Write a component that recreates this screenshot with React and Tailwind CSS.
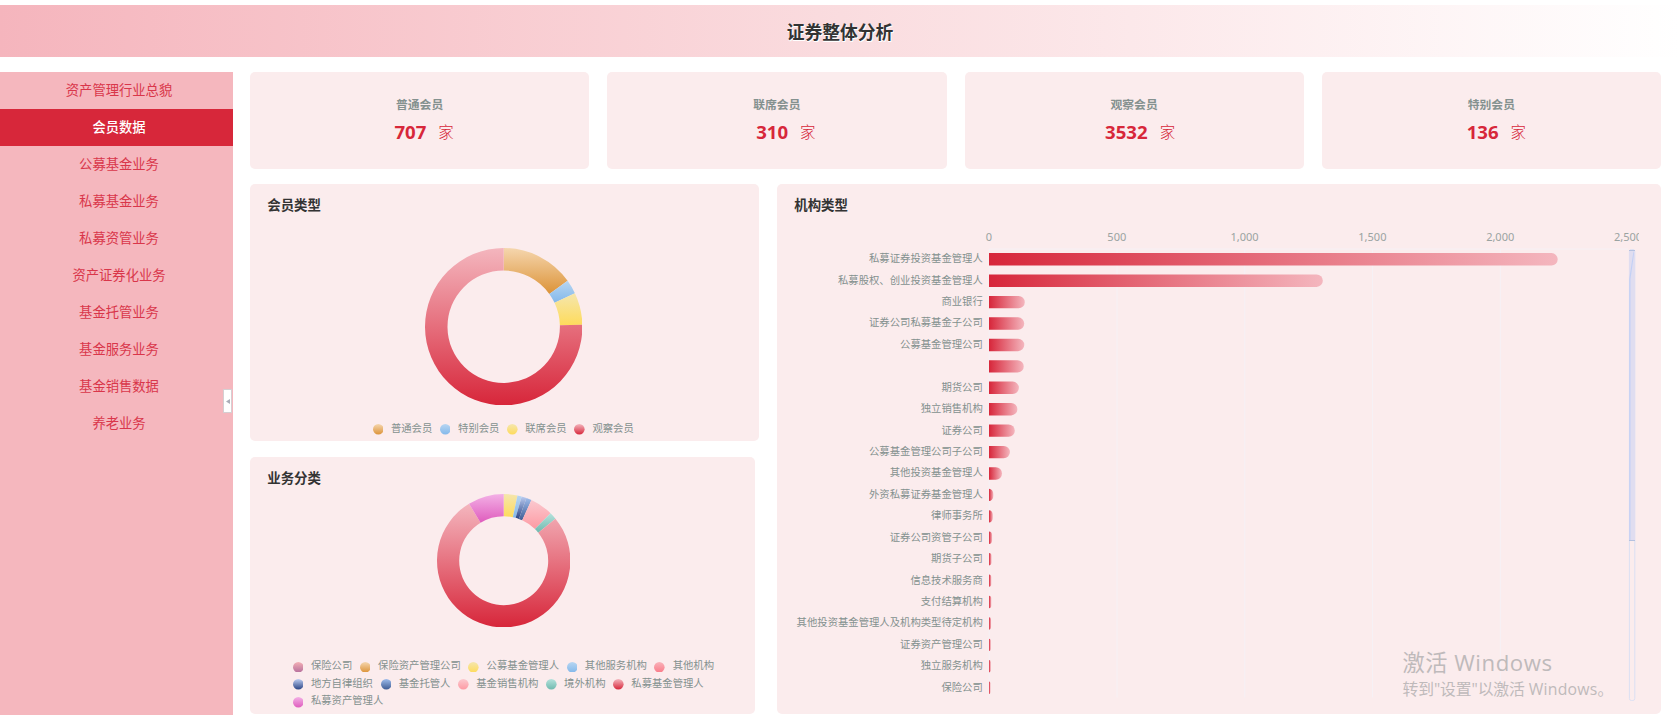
import React from 'react';

const menu = [
  '资产管理行业总貌',
  '会员数据',
  '公募基金业务',
  '私募基金业务',
  '私募资管业务',
  '资产证券化业务',
  '基金托管业务',
  '基金服务业务',
  '基金销售数据',
  '养老业务',
];

const stats = [
  { name: '普通会员', value: 707, indent: 'pl-[9px]' },
  { name: '联席会员', value: 310, indent: 'pl-[18px]' },
  { name: '观察会员', value: 3532, indent: 'pl-[12px]' },
  { name: '特别会员', value: 136, indent: 'pl-[10px]' },
];

const colors = {
  mauve: ['#f4b0b6', '#b66f9c'],
  orange: ['#f5d6ae', '#dc9338'],
  yellow: ['#f5e6ae', '#fedb5b'],
  blue: ['#b8d6f2', '#83b8ea'],
  rose: ['#f9b3ba', '#fa7b89'],
  navy: ['#bccdf2', '#2b4484'],
  steel: ['#9ebcec', '#3f5c93'],
  pink: ['#fbc9cf', '#fd9aa3'],
  teal: ['#b5e2dc', '#6fb9ae'],
  red: ['#f4b6be', '#d7263a'],
  magenta: ['#f3b0e6', '#df5cbd'],
};

const memberTypes = [
  { name: '普通会员', color: 'orange', end: 54.3 },
  { name: '特别会员', color: 'blue', end: 64.8 },
  { name: '联席会员', color: 'yellow', end: 88.6 },
  { name: '观察会员', color: 'red', end: 360 },
];

const businessTypes = [
  { name: '保险公司', color: 'mauve', end: 0 },
  { name: '保险资产管理公司', color: 'orange', end: 0 },
  { name: '公募基金管理人', color: 'yellow', end: 11.9 },
  { name: '其他服务机构', color: 'blue', end: 15.6 },
  { name: '其他机构', color: 'rose', end: 15.6 },
  { name: '地方自律组织', color: 'navy', end: 20 },
  { name: '基金托管人', color: 'steel', end: 24.6 },
  { name: '基金销售机构', color: 'pink', end: 44.6 },
  { name: '境外机构', color: 'teal', end: 50.9 },
  { name: '私募基金管理人', color: 'red', end: 328.7 },
  { name: '私募资产管理人', color: 'magenta', end: 360 },
];

const orgs = [
  ['私募证券投资基金管理人', 2225],
  ['私募股权、创业投资基金管理人', 1306],
  ['商业银行', 140],
  ['证券公司私募基金子公司', 138],
  ['公募基金管理公司', 138],
  ['', 136],
  ['期货公司', 117],
  ['独立销售机构', 111],
  ['证券公司', 101],
  ['公募基金管理公司子公司', 82],
  ['其他投资基金管理人', 51],
  ['外资私募证券基金管理人', 17],
  ['律师事务所', 15],
  ['证券公司资管子公司', 12],
  ['期货子公司', 10],
  ['信息技术服务商', 9],
  ['支付结算机构', 9],
  ['其他投资基金管理人及机构类型待定机构', 8],
  ['证券资产管理公司', 7],
  ['独立服务机构', 7],
  ['保险公司', 6],
];

const sector = (start, end, R, r) => {
  const point = (deg, radius) => {
    const a = (deg * Math.PI) / 180;
    return `${(radius * Math.sin(a)).toFixed(3)} ${(-radius * Math.cos(a)).toFixed(3)}`;
  };
  const stop = end === 360 ? 359.99 : end;
  const large = stop - start > 180 ? 1 : 0;
  return `M${point(start, R)}A${R} ${R} 0 ${large} 1 ${point(stop, R)}L${point(stop, r)}A${r} ${r} 0 ${large} 0 ${point(start, r)}Z`;
};

const Donut = ({ items, R, r, className }) => (
  <svg className={className} width={R * 2} height={R * 2} viewBox={`${-R} ${-R} ${R * 2} ${R * 2}`}>
    {items.map((item, i) => {
      const start = i ? items[i - 1].end : 0;
      return item.end > start && <path key={item.name} d={sector(start, item.end, R, r)} fill={`url(#${item.color})`} />;
    })}
  </svg>
);

const Legend = ({ items, className }) => (
  <ul className={`flex flex-wrap gap-x-[7.6px] text-[10.35px] leading-[17.6px] text-[#84918f] ${className}`}>
    {items.map(item => (
      <li key={item.name} className="flex items-center gap-[7.6px] whitespace-nowrap">
        <svg className="mt-[2px]" width="10.6" height="10.6" viewBox="0 0 10 10">
          <circle cx="5" cy="5" r="5" fill={`url(#${item.color})`} />
        </svg>
        {item.name}
      </li>
    ))}
  </ul>
);

const PanelTitle = ({ children }) => (
  <h2 className="pl-[17.3px] pt-[11px] text-[13.4px] leading-5 font-bold text-[#333]">{children}</h2>
);

// flat on the axis side, rounded on the far side
const barPath = (y, w, h) => {
  const r = Math.min(h / 2, w);
  const ry = Math.min(h / 2, r * 1.2);
  return `M989 ${y}h${w - r}a${r} ${ry} 0 0 1 ${r} ${ry}v${h - ry * 2}a${r} ${ry} 0 0 1 ${-r} ${ry}H989Z`;
};

const BarChart = () => (
  <svg className="block" width="884" height="510" viewBox="777 204 884 510">
    <defs>
      <clipPath id="plot">
        <rect x="777" y="204" width="862" height="510" />
      </clipPath>
    </defs>
    <g stroke="#f6f1f5" strokeWidth="1">
      {[0, 1, 2, 3, 4].map(n => (
        <line key={n} x1={989.2 + n * 127.8} x2={989.2 + n * 127.8} y1="249" y2="697.5" />
      ))}
      <line x1="989" x2="1628" y1="249" y2="249" />
    </g>
    <g fontSize="11" fill="#9aa3a1" textAnchor="middle" clipPath="url(#plot)">
      {['0', '500', '1,000', '1,500', '2,000', '2,500'].map((label, n) => (
        <text key={label} x={989 + n * 127.8} y="240.8">{label}</text>
      ))}
    </g>
    {orgs.map(([name, value], i) => {
      const y = 253.1 + i * 21.42;
      return (
        <g key={i}>
          <text x="982.8" y={y + 9.1} fontSize="10.35" fill="#84918f" textAnchor="end">{name}</text>
          <path d={barPath(y, value * 0.2556, 12.4)} fill="url(#bar)" />
        </g>
      );
    })}
    {/* zoom slider */}
    <rect x="1629.4" y="249.5" width="5.4" height="451" rx="2" fill="none" stroke="#dbe0f3" />
    <rect x="1629" y="250" width="6" height="291" fill="#e0ddf0" />
    <path d="M1634 251v3l-3.5 25V541h-1.3V279l4-26Z" fill="#c3d0f5" />
    <path d="M1629 250.5h6M1629 540.5h6" stroke="#b4c1e0" />
  </svg>
);

const Gradients = () => (
  <svg className="absolute size-0">
    <defs>
      {Object.entries(colors).map(([id, [from, to]]) => (
        <linearGradient key={id} id={id} x1="0" y1="0" x2="0" y2="1">
          <stop offset="0" stopColor={from} />
          <stop offset="1" stopColor={to} />
        </linearGradient>
      ))}
      <linearGradient id="bar">
        <stop offset="0" stopColor="#d7263a" />
        <stop offset="1" stopColor="#f4b6be" />
      </linearGradient>
    </defs>
  </svg>
);

const App = () => (
  <div className="relative h-[715px] w-[1680px] overflow-hidden bg-white pt-[5px] font-['Noto_Sans','Noto_Sans_CJK_SC',sans-serif]">
    <Gradients />
    <header className="flex h-[52px] items-center justify-center bg-linear-to-r from-[#f5b5bd] via-[#fadcdf] to-white pt-[2px]">
      <h1 className="text-[17.8px] leading-6 font-bold text-[#333] [text-shadow:0_1px_0_#fff,1px_1px_0_#fff]">证券整体分析</h1>
    </header>

    <div className="mt-[15px] flex">
      <aside className="flex h-[643px] w-[233px] shrink-0 bg-[#f5b7be]">
        <nav className="w-full">
          {menu.map(item => (
            <a
              key={item}
              className={`flex h-[37px] items-center justify-center pl-[5px] text-[13.3px] ${item === '会员数据' ? 'bg-[#d7273a] font-medium text-white' : 'text-[#d9364a]'}`}
            >
              {item}
            </a>
          ))}
        </nav>
        <button className="-ml-[10px] mt-[317px] flex h-6 w-[9px] shrink-0 items-center justify-center border border-[#d5cfd2] bg-white">
          <svg width="4" height="5" viewBox="0 0 4 5">
            <path d="M4 0v5L0 2.5Z" fill="#a9adb8" />
          </svg>
        </button>
      </aside>

      <main className="ml-[17px] w-[1411px]">
        <section className="grid grid-cols-4 gap-[18px]">
          {stats.map(stat => (
            <div key={stat.name} className="flex h-[97px] flex-col items-center rounded-[5px] bg-[#fbeced] pt-[22px]">
              <p className="text-[11.8px] leading-5 font-bold text-[#84918f]">{stat.name}</p>
              <p className={`mt-[3px] flex items-center gap-[12px] text-[#d7273a] ${stat.indent}`}>
                <b className="text-[18.6px] leading-[30px]">{stat.value}</b>
                <span className="text-[15.5px] leading-[30px] font-light">家</span>
              </p>
            </div>
          ))}
        </section>

        <div className="mt-[15px] flex justify-between">
          <div className="flex flex-col gap-4">
            <section className="h-[257px] w-[509px] rounded-[5px] bg-[#fbeced]">
              <PanelTitle>会员类型</PanelTitle>
              <Donut className="ml-[174.6px] mt-[32.5px]" items={memberTypes} R={78.7} r={56.2} />
              <Legend className="ml-[122.7px] mt-[14.9px]" items={memberTypes} />
            </section>
            <section className="h-[257px] w-[505px] rounded-[5px] bg-[#fbeced]">
              <PanelTitle>业务分类</PanelTitle>
              <Donut className="ml-[186.5px] mt-[5.5px]" items={businessTypes} R={66.7} r={44.5} />
              <Legend className="ml-[42.7px] mt-[30.4px] w-[430px]" items={businessTypes} />
            </section>
          </div>
          <section className="h-[530px] w-[884px] overflow-hidden rounded-[5px] bg-[#fbeced]">
            <PanelTitle>机构类型</PanelTitle>
            <div className="-mt-[11px]">
              <BarChart />
            </div>
          </section>
        </div>
      </main>
    </div>

    {/* system watermark, floats over the page */}
    <div className="absolute left-[1402.5px] top-[648px] whitespace-nowrap text-[#bfbabb] font-['Open_Sans','Noto_Sans_CJK_SC',sans-serif]">
      <p className="text-[22.2px] leading-[30px] tracking-[0.55px]">激活 Windows</p>
      <p className="mt-px text-[15.8px] leading-5 tracking-[-0.1px]">
        转到"设置"以激活 <span className="tracking-[0.2px]">Windows。</span>
      </p>
    </div>
  </div>
);

export default App;
